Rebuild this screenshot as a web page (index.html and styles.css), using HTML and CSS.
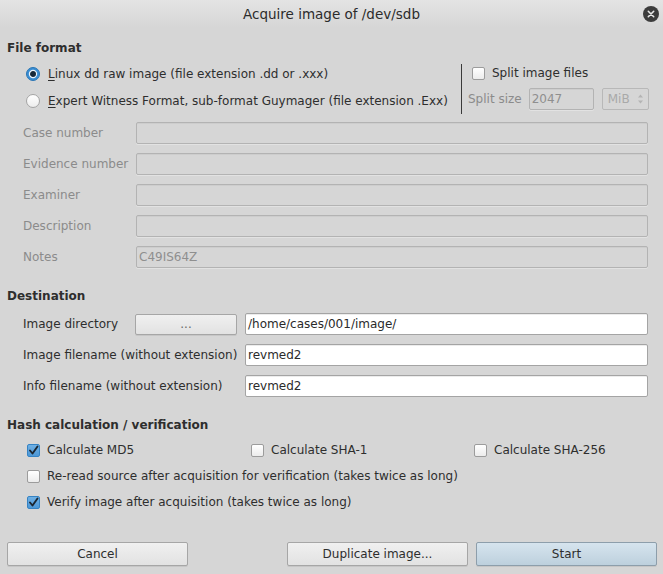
FILE: index.html
```html
<!DOCTYPE html>
<html>
<head>
<meta charset="utf-8">
<title>Acquire image of /dev/sdb</title>
<link rel="stylesheet" href="styles.css">
</head>
<body>
<div class="dialog">
  <div class="titlebar">
    <span></span>
    <span class="title">Acquire image of /dev/sdb</span>
    <span class="close">
      <svg width="16" height="16" viewBox="0 0 16 16"><circle cx="8" cy="8" r="8" fill="#3c3c3c"/><path d="M5.3 5.3 L10.7 10.7 M10.7 5.3 L5.3 10.7" stroke="#e8e8e8" stroke-width="1.6" stroke-linecap="round"/></svg>
    </span>
  </div>

  <div class="content">
    <h2 class="heading">File format</h2>
    <div class="format">
      <div class="formats">
        <div class="opt">
          <svg class="radio" width="14" height="14" viewBox="0 0 14 14"><circle cx="7" cy="7" r="6.5" fill="#3a8dd2" stroke="#2b76b4"/><circle cx="7" cy="7" r="3.6" fill="#16293a" stroke="#e9f3fb" stroke-width="1.2"/></svg>
          <span><u>L</u>inux dd raw image (file extension .dd or .xxx)</span>
        </div>
        <div class="opt">
          <svg class="radio" width="14" height="14" viewBox="0 0 14 14"><defs><linearGradient id="rg" x1="0" y1="0" x2="0" y2="1"><stop offset="0" stop-color="#ffffff"/><stop offset="1" stop-color="#ececec"/></linearGradient></defs><circle cx="7" cy="7" r="6.5" fill="url(#rg)" stroke="#a3a3a3"/></svg>
          <span><u>E</u>xpert Witness Format, sub-format Guymager (file extension .Exx)</span>
        </div>
      </div>
      <div class="vsep"></div>
      <div class="split">
        <div class="chk-row">
          <span class="box"></span>
          <span>Split image files</span>
        </div>
        <div class="split-size">
          <span class="dim">Split size</span>
          <span class="field dis small">2047</span>
          <span class="combo">MiB<span class="spin"><svg width="7" height="12" viewBox="0 0 7 12"><path d="M1 4.5 L3.5 1.5 L6 4.5 Z M1 7.5 L3.5 10.5 L6 7.5 Z" fill="#b4b4b4"/></svg></span></span>
        </div>
      </div>
    </div>

    <div class="fields">
      <span class="lbl dim">Case number</span><span class="field dis"></span>
      <span class="lbl dim">Evidence number</span><span class="field dis"></span>
      <span class="lbl dim">Examiner</span><span class="field dis"></span>
      <span class="lbl dim">Description</span><span class="field dis"></span>
      <span class="lbl dim">Notes</span><span class="field dis">C49IS64Z</span>
    </div>

    <h2 class="heading dest">Destination</h2>
    <div class="dest-grid">
      <span class="lbl">Image directory</span>
      <span class="browse-cell"><span class="btn browse">...</span></span>
      <span class="field">/home/cases/001/image/</span>
      <span class="lbl span2">Image filename (without extension)</span>
      <span class="field">revmed2</span>
      <span class="lbl span2">Info filename (without extension)</span>
      <span class="field">revmed2</span>
    </div>

    <h2 class="heading hash">Hash calculation / verification</h2>
    <div class="hash-grid">
      <div class="chk-row"><span class="box on"><svg width="13" height="13" viewBox="0 0 13 13"><path d="M3 6.5 L5.5 9.5 L10.5 2.5" fill="none" stroke="#1b2631" stroke-width="1.9" stroke-linecap="round" stroke-linejoin="round"/></svg></span><span>Calculate MD5</span></div>
      <div class="chk-row"><span class="box"></span><span>Calculate SHA-1</span></div>
      <div class="chk-row"><span class="box"></span><span>Calculate SHA-256</span></div>
      <div class="chk-row full"><span class="box"></span><span>Re-read source after acquisition for verification (takes twice as long)</span></div>
      <div class="chk-row full"><span class="box on"><svg width="13" height="13" viewBox="0 0 13 13"><path d="M3 6.5 L5.5 9.5 L10.5 2.5" fill="none" stroke="#1b2631" stroke-width="1.9" stroke-linecap="round" stroke-linejoin="round"/></svg></span><span>Verify image after acquisition (takes twice as long)</span></div>
    </div>
  </div>

  <div class="footer">
    <span class="btn big">Cancel</span>
    <span class="footer-right">
      <span class="btn big">Duplicate image...</span>
      <span class="btn big primary">Start</span>
    </span>
  </div>
</div>
</body>
</html>
```

FILE: styles.css
```css
* { box-sizing: border-box; }
html, body { margin: 0; padding: 0; }
body {
  width: 663px;
  height: 574px;
  background: #d6d6d6;
  font-family: "DejaVu Sans", sans-serif;
  font-size: 12px;
  color: #2e2e2e;
  overflow: hidden;
}
.dialog {
  width: 663px;
  height: 574px;
  display: flex;
  flex-direction: column;
}
.titlebar {
  height: 27px;
  display: grid;
  grid-template-columns: 1fr auto 1fr;
  align-items: center;
  background: linear-gradient(#e4e4e4, #d6d6d6);
}
.title {
  font-size: 13.5px;
  color: #2b2b2b;
}
.close {
  justify-self: end;
  margin-right: 4px;
  display: flex;
}
.content {
  padding: 13px 0 0 0;
  flex: 1;
}
.heading {
  margin: 0;
  padding-left: 7px;
  font-size: 12px;
  font-weight: bold;
  line-height: 16px;
  color: #2e2e2e;
}
.format {
  display: flex;
  margin-top: 8px;
  height: 50px;
}
.formats {
  width: 461px;
  padding-left: 26px;
  display: flex;
  flex-direction: column;
}
.opt {
  display: flex;
  align-items: center;
  height: 27px;
  gap: 8px;
  margin-top: -4px;
}
.opt + .opt { margin-top: 0; }
.opt u { text-decoration-thickness: 1px; text-underline-offset: 2px; }
.radio { flex: none; }
.vsep {
  width: 1px;
  background: #3a3a3a;
  height: 50px;
}
.split {
  padding-left: 6px;
  display: flex;
  flex-direction: column;
  width: 201px;
}
.chk-row {
  display: flex;
  align-items: center;
  gap: 7px;
  height: 26px;
}
.split .chk-row { padding-left: 4px; margin-top: -4px; }
.box {
  width: 13px;
  height: 13px;
  flex: none;
  border: 1px solid #9c9c9c;
  border-radius: 2px;
  background: linear-gradient(#ffffff, #ececec);
  position: relative;
}
.box.on {
  border-color: #3583c4;
  background: linear-gradient(#6fb0e4, #4c97d6);
}
.box.on svg { position: absolute; left: -1px; top: -1px; }
.split-size {
  display: flex;
  align-items: center;
  margin-top: 2px;
  height: 22px;
}
.dim { color: #8b8b8b; }
.field {
  display: flex;
  align-items: center;
  height: 22px;
  padding-left: 2px;
  border: 1px solid #a4a4a4;
  border-radius: 2px;
  background: #ffffff;
  color: #2a2a2a;
  box-shadow: inset 0 1px 0 #ececec;
}
.field.dis {
  background: #d6d6d6;
  border-color: #b3b3b3;
  color: #8f8f8f;
  box-shadow: inset 0 1px 0 #cdcdcd, 0 1px 0 #e2e2e2;
}
.field.small {
  width: 65px;
  margin-left: 7px;
}
.combo {
  margin-left: 8px;
  width: 47px;
  height: 22px;
  border: 1px solid #b8b8b8;
  border-radius: 2px;
  color: #a9a9a9;
  display: flex;
  align-items: center;
  justify-content: space-between;
  padding: 0 4px 0 5px;
}
.spin { display: flex; }
.fields {
  margin-top: 8px;
  display: grid;
  grid-template-columns: 113px 512px;
  grid-auto-rows: 22px;
  row-gap: 9px;
  padding-left: 23px;
  align-items: center;
}
.lbl { white-space: nowrap; }
.heading.dest { margin-top: 20px; }
.dest-grid {
  margin-top: 9px;
  display: grid;
  grid-template-columns: 112px 110px 403px;
  grid-auto-rows: 22px;
  row-gap: 9px;
  padding-left: 23px;
  align-items: center;
}
.span2 { grid-column: span 2; }
.browse-cell { display: flex; }
.btn {
  display: flex;
  align-items: center;
  justify-content: center;
  border: 1px solid #a6a6a6;
  border-radius: 2px;
  background: linear-gradient(#f0f0f0, #e2e2e2);
  color: #2e2e2e;
  box-shadow: 0 1px 0 #c6c6c6;
}
.browse {
  width: 102px;
  height: 21px;
  color: #6a6a6a;
}
.heading.hash { margin-top: 20px; }
.hash-grid {
  margin-top: 4px;
  display: grid;
  grid-template-columns: 224px 223px 1fr;
  padding-left: 27px;
}
.hash-grid .full { grid-column: 1 / -1; }
.footer {
  height: 32px;
  padding: 0 6px 8px 7px;
  display: flex;
  justify-content: space-between;
  align-items: flex-start;
}
.footer-right { display: flex; gap: 8px; }
.big {
  width: 181px;
  height: 24px;
  color: #2e2e2e;
}
.primary {
  background: linear-gradient(#d6e4ee, #bdd0dd);
  border-color: #8d9eab;
}
```
